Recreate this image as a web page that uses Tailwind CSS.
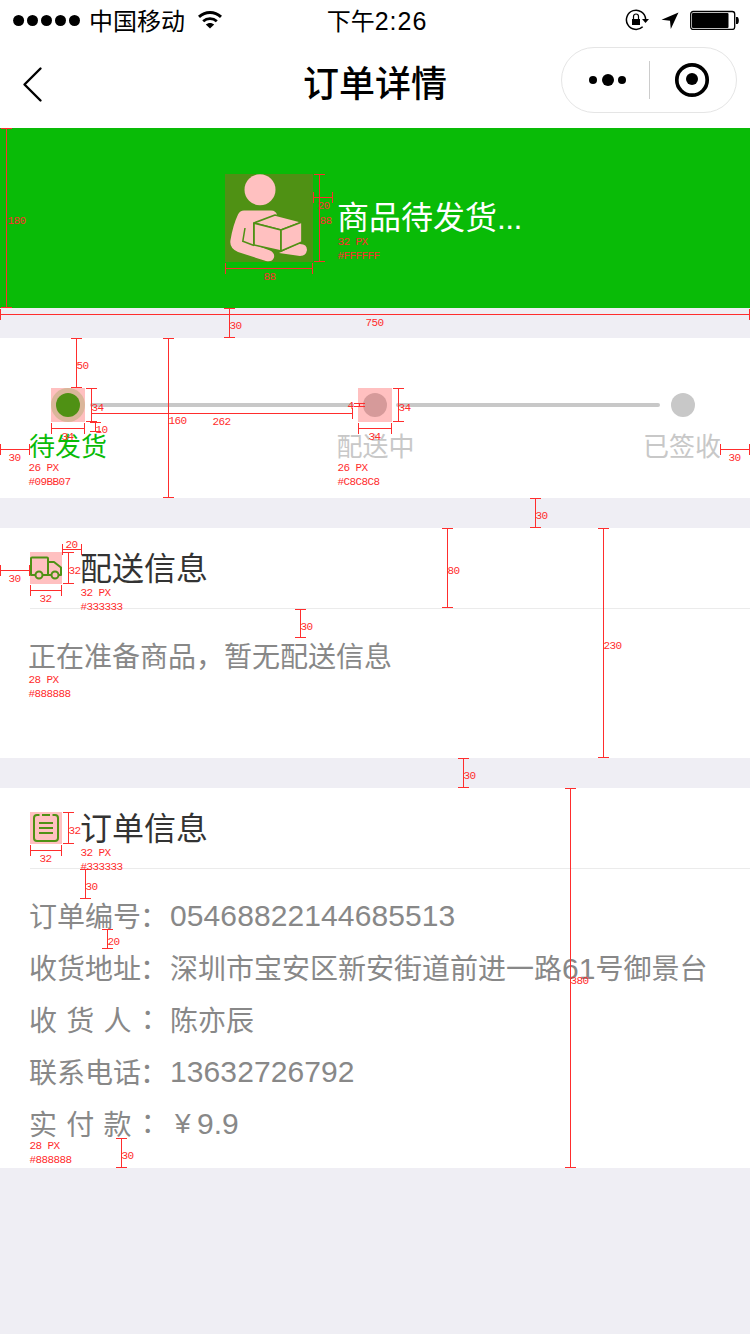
<!DOCTYPE html>
<html lang="zh-CN">
<head>
<meta charset="utf-8">
<title>订单详情</title>
<script src="https://cdn.jsdelivr.net/npm/@tailwindcss/browser@4"></script>
</head>
<body class="bg-[#efeef4]">
<div class="relative w-[750px] h-[1334px] overflow-hidden font-['Noto_Sans_CJK_SC','Liberation_Sans',sans-serif]">

  <header class="h-32 bg-white text-black">
    <div class="h-10 grid grid-cols-3 grid-rows-[40px] items-center">
      <div class="flex items-center pl-[13px]">
        <svg class="w-[68px] h-3" viewBox="0 0 68 12"><circle cx="5.6" cy="6.5" r="5.5"/><circle cx="19.5" cy="6.5" r="5.5"/><circle cx="33.5" cy="6.5" r="5.5"/><circle cx="47.5" cy="6.5" r="5.5"/><circle cx="61.5" cy="6.5" r="5.5"/></svg>
        <span class="ml-2 text-2xl leading-10">中国移动</span>
        <svg class="ml-[13px] w-6 h-5" viewBox="0 0 24 20" fill="none" stroke="#000"><path d="M1 6.8C7.500 1 16.500 1 23 6.800" stroke-width="3"/><path d="M5.200 11.200C9 7.700 15 7.700 18.800 11.200" stroke-width="2.800"/><path d="M12 18.500 7.800 14.500C10 12.400 14 12.400 16.200 14.500Z" fill="#000" stroke="none"/></svg>
      </div>
      <div class="flex justify-center items-center text-2xl leading-10 ml-1"><span>下午</span><span class="font-['Liberation_Sans'] text-[25px] tracking-[1px] pt-px">2:26</span></div>
      <div class="flex items-center justify-end pr-[10px]">
        <svg class="w-6 h-6" viewBox="0 0 24 24"><path d="M17.700 18.700A9.600 9.600 0 1 1 20.600 11" fill="none" stroke="#000" stroke-width="1.500"/><path d="M17 11h7l-3.500 4z"/><path d="M7 11h8v6H7z"/><path d="M8.500 11V8.500a2.500 2.500 0 0 1 5 0V11" fill="none" stroke="#000" stroke-width="1.200"/></svg>
        <svg class="ml-[12px] w-[18px] h-[18px]" viewBox="0 0 18 18"><path d="M17.500 1.500 9.800 18 9 9.800 .500 8.800z"/></svg>
        <svg class="ml-[11px] w-[50px] h-5" viewBox="0 0 50 20"><rect x=".700" y="1.500" width="44" height="18" rx="2.500" fill="none" stroke="#000" stroke-width="1.300"/><rect x="2" y="3" width="36.500" height="15" rx="1"/><path d="M46 7h1.500c1.800 1 1.800 6 0 7H46z"/></svg>
      </div>
    </div>
    <div class="h-22 grid grid-cols-3 items-center pb-1">
      <svg class="ml-[21px] mt-1 w-6 h-10" viewBox="0 0 24 40"><path d="M19.500 4.500 3.500 20.500 19.500 36.500" fill="none" stroke="#000" stroke-width="2.400" stroke-linecap="round" stroke-linejoin="round"/></svg>
      <h1 class="text-4xl leading-[52px] font-medium text-center pb-0.5">订单详情</h1>
      <div class="justify-self-end mr-[13px] -mt-[4px] w-[176px] h-[66px] rounded-full border border-[#e5e5e5] flex items-center">
        <svg class="w-[174px] h-16" viewBox="0 0 174 64"><circle cx="31" cy="32" r="4"/><circle cx="46" cy="32" r="6"/><circle cx="60" cy="32" r="4"/><path d="M87.500 13v38" stroke="#ccc"/><circle cx="130" cy="32" r="15.200" fill="none" stroke="#000" stroke-width="3.700"/><circle cx="130" cy="31" r="6"/></svg>
      </div>
    </div>
  </header>

  <main class="flex flex-col gap-[30px]">
    <section class="h-[180px] bg-[#09bb07] flex items-center pl-[225px]">
      <svg class="w-[88px] h-[88px]" viewBox="0 0 88 88">
        <rect width="88" height="88" fill="#4f9114"/>
        <g fill="#ffc0c0">
          <circle cx="35" cy="15.800" r="15.500"/>
          <path d="M19 36.500H46Q51 36.500 52 41L28 49V70L45 76.500Q50 79 49 83.500Q47 88.500 41 87L13 78Q4 74 5.500 66Q8 51 13 40.500Q15 36.500 19 36.500Z"/>
          <path d="M54 79 73 70Q82 69 82 76Q81 82 75 82Z"/>
        </g>
        <path d="M20 54 17.800 67.300 29 71.500" fill="none" stroke="#4f9114" stroke-width="1.500"/>
        <g fill="#ffc0c0" stroke="#4f9114" stroke-width="1.700" stroke-linejoin="round"><path d="M29 49 50 41 77 48 56 56Z"/><path d="M29 49 56 56V77L29 71Z"/><path d="M56 56 77 48V68L56 77Z"/></g>
      </svg>
      <p class="ml-6 pb-[3px] text-[32px] leading-12 text-white">商品待发货<span class="font-['Liberation_Sans'] tracking-[-0.6px]">...</span></p>
    </section>

    <section class="h-[160px] bg-white pt-[50px]">
      <div class="flex items-center pl-[51px]">
        <div class="size-[34px] bg-[#ffc0c0]"><div class="size-full rounded-full bg-[#dab69a] p-[5px]"><div class="size-6 rounded-full bg-[#4f9114]"></div></div></div>
        <div class="ml-[5px] w-[264px] h-1 rounded-full bg-[#c8c8c8]"></div>
        <div class="ml-1 size-[34px] bg-[#ffc0c0] p-[5px]"><div class="size-6 rounded-full bg-[#d69a9a]"></div></div>
        <div class="ml-1 w-[264px] h-1 rounded-full bg-[#c8c8c8]"></div>
        <div class="ml-[11px] size-6 rounded-full bg-[#c8c8c8]"></div>
      </div>
      <div class="flex justify-between px-[29px] pt-[3px] text-[26px] leading-10 text-[#c8c8c8]"><span class="text-[#09bb07]">待发货</span><span class="pl-px">配送中</span><span>已签收</span></div>
    </section>

    <section class="h-[230px] bg-white">
      <div class="ml-[30px] h-[81px] border-b border-[#ebebeb] flex items-center">
        <svg class="size-8" viewBox="0 0 32 32" fill="none" stroke="#4f9114" stroke-width="2" stroke-linejoin="round"><rect width="32" height="32" fill="#ffc0c0" stroke="none"/><path d="M5 23H1V6.200Q1 5.500 2 5.500H17Q18 5.500 18 6.500V23H13M18 10H24L31 15.500V23H29M21 23H18"/><circle cx="9" cy="23" r="3.500"/><circle cx="25" cy="23" r="3.500"/></svg>
        <h2 class="ml-[18px] pb-[4px] text-[32px] leading-12 text-[#333]">配送信息</h2>
      </div>
      <p class="ml-[28px] pt-[26px] text-[28px] leading-10 text-[#888]">正在准备商品，暂无配送信息</p>
    </section>

    <section class="h-[380px] bg-white">
      <div class="ml-[30px] h-[81px] border-b border-[#ebebeb] flex items-center">
        <svg class="size-8" viewBox="0 0 32 32" fill="none" stroke="#4f9114" stroke-width="2"><rect width="32" height="32" fill="#ffc0c0" stroke="none"/><path d="M7.500 3H7Q4 3 4 6V26Q4 29 7 29H25Q28 29 28 26V6Q28 3 25 3H22.500M7 3H9.500M12 3H20M9 11H23M9 16H23M9 21H23"/></svg>
        <h2 class="ml-[18px] pb-[4px] text-[32px] leading-12 text-[#333]">订单信息</h2>
      </div>
      <dl class="ml-[29px] mt-[20px] grid grid-cols-[141px_1fr] auto-rows-[52px] text-[28px] leading-[52px] text-[#888] whitespace-nowrap">
        <dt>订单编号<span class="-ml-px">：</span></dt><dd class="font-['Liberation_Sans'] text-[30px] tracking-[0.1px] pt-px">05468822144685513</dd>
        <dt>收货地址<span class="-ml-px">：</span></dt><dd>深圳市宝安区新安街道前进一路<span class="font-['Liberation_Sans'] text-[30px]">61</span>号御景台</dd>
        <dt class="[word-spacing:3px]">收 货 人 <span class="relative -top-[2px]">：</span></dt><dd>陈亦辰</dd>
        <dt>联系电话<span class="-ml-px">：</span></dt><dd class="font-['Liberation_Sans'] text-[30px] tracking-[0.1px] pt-px">13632726792</dd>
        <dt class="[word-spacing:3px]">实 付 款 <span class="relative -top-[2px]">：</span></dt><dd class="pl-[5px] pt-px flex font-['Liberation_Sans']"><span class="w-[22px] text-[28px]">¥</span><span class="text-[30px]">9.9</span></dd>
      </dl>
    </section>
  </main>

  <svg id="marks" class="absolute inset-0 w-[750px] h-[1334px] font-['Liberation_Mono',monospace]" viewBox="0 0 750 1334" fill="#ff2d2d" font-size="11" letter-spacing="-0.6"></svg>
</div>
<script>
// vertical dimensions: x, top, bottom
const vertical = [[6,128,307],[229,308,337],[319,174,261],[76,338,387],[168,338,497],[91,388,421],[95,422,431],[398,388,421],[535,498,527],[447,528,607],[603,528,757],[300,609,637],[463,758,787],[570,788,1167],[68,552,583],[68,812,843],[85,869,898],[107,929,948],[121,1138,1167]];
// horizontal dimensions: y, left, right
const horizontal = [[314,0,749],[197,313,332],[268,225,312],[413,91,352],[428,51,84],[449,0,29],[428,358,391],[449,720,749],[549,62,81],[570,0,29],[590,30,61],[850,30,61]];
// labels: text, left, vertical centre
const labels = [['180',7,220],['750',365,322],['30',229,325],['88',319,220],['20',317,205],['88',263,276],['32 PX',337,241],['#FFFFFF',337,255],['50',76,365],['160',168,420],['34',91,407],['262',212,421],['34',61,436],['10',95,429],['30',8,457],['26 PX',28,467],['#09BB07',28,481],['4',347,405],['34',398,407],['34',368,436],['26 PX',337,467],['#C8C8C8',337,481],['30',728,457],['30',535,515],['80',447,570],['230',603,645],['30',300,626],['30',463,775],['380',570,980],['32',68,570],['20',65,544],['30',8,578],['32',39,598],['32 PX',80,592],['#333333',80,606],['28 PX',28,679],['#888888',28,693],['32',68,830],['32',39,858],['32 PX',80,852],['#333333',80,866],['30',85,886],['20',107,941],['28 PX',29,1145],['#888888',29,1159],['30',121,1155]];
let d = 'M354 403.500h11M354 406.500h11M359.500 403v4';
for (const [x,a,b] of vertical) d += `M${x+.5} ${a}V${b+1}M${x-5} ${a+.5}h11M${x-5} ${b+.5}h11`;
for (const [y,a,b] of horizontal) d += `M${a} ${y+.5}H${b+1}M${a+.5} ${y-5}v11M${b+.5} ${y-5}v11`;
document.getElementById('marks').innerHTML = `<path d="${d}" fill="none" stroke="#ff2d2d" stroke-width="1"/>` + labels.map(([t,x,y]) => `<text x="${x+.5}" y="${y+3.5}">${t}</text>`).join('');
</script>
</body>
</html>
